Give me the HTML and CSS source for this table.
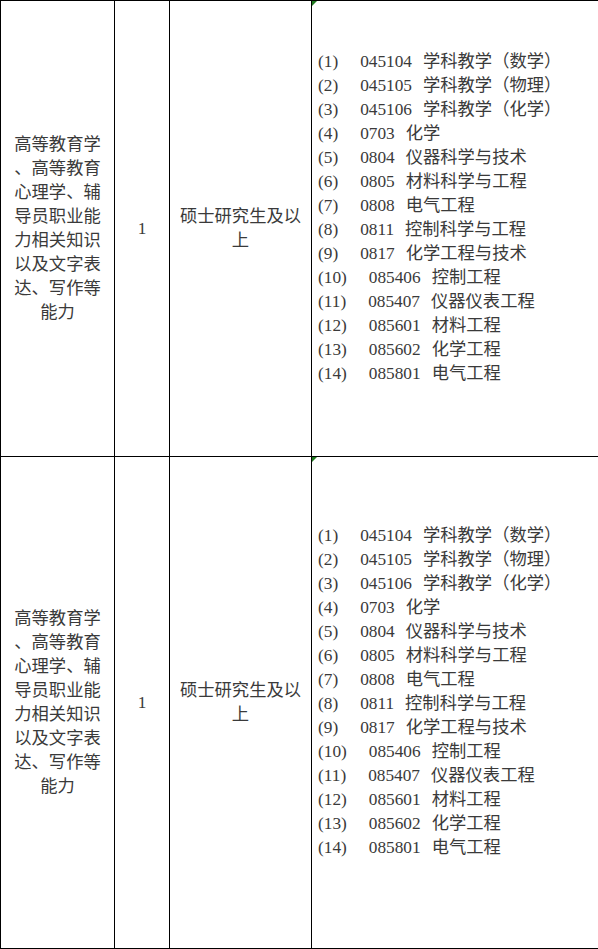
FILE: index.html
```html
<!DOCTYPE html>
<html lang="zh-CN">
<head>
<meta charset="utf-8">
<link rel="stylesheet" href="styles.css">
</head>
<body>
<table class="grid">
  <colgroup>
    <col class="c1"><col class="c2"><col class="c3"><col class="c4">
  </colgroup>
  <tbody>
    <tr class="r1">
      <td class="center desc">高等教育学、高等教育心理学、辅导员职业能力相关知识以及文字表达、写作等能力</td>
      <td class="center">1</td>
      <td class="center degree">硕士研究生及以上</td>
      <td class="list"><span class="mark"></span>
        <div class="item"><span class="no">(1)</span><span class="code">045104</span>学科教学（数学）</div>
        <div class="item"><span class="no">(2)</span><span class="code">045105</span>学科教学（物理）</div>
        <div class="item"><span class="no">(3)</span><span class="code">045106</span>学科教学（化学）</div>
        <div class="item"><span class="no">(4)</span><span class="code">0703</span>化学</div>
        <div class="item"><span class="no">(5)</span><span class="code">0804</span>仪器科学与技术</div>
        <div class="item"><span class="no">(6)</span><span class="code">0805</span>材料科学与工程</div>
        <div class="item"><span class="no">(7)</span><span class="code">0808</span>电气工程</div>
        <div class="item"><span class="no">(8)</span><span class="code">0811</span>控制科学与工程</div>
        <div class="item"><span class="no">(9)</span><span class="code">0817</span>化学工程与技术</div>
        <div class="item"><span class="no">(10)</span><span class="code">085406</span>控制工程</div>
        <div class="item"><span class="no">(11)</span><span class="code">085407</span>仪器仪表工程</div>
        <div class="item"><span class="no">(12)</span><span class="code">085601</span>材料工程</div>
        <div class="item"><span class="no">(13)</span><span class="code">085602</span>化学工程</div>
        <div class="item"><span class="no">(14)</span><span class="code">085801</span>电气工程</div>
      </td>
    </tr>
    <tr class="r2">
      <td class="center desc">高等教育学、高等教育心理学、辅导员职业能力相关知识以及文字表达、写作等能力</td>
      <td class="center">1</td>
      <td class="center degree">硕士研究生及以上</td>
      <td class="list"><span class="mark"></span>
        <div class="item"><span class="no">(1)</span><span class="code">045104</span>学科教学（数学）</div>
        <div class="item"><span class="no">(2)</span><span class="code">045105</span>学科教学（物理）</div>
        <div class="item"><span class="no">(3)</span><span class="code">045106</span>学科教学（化学）</div>
        <div class="item"><span class="no">(4)</span><span class="code">0703</span>化学</div>
        <div class="item"><span class="no">(5)</span><span class="code">0804</span>仪器科学与技术</div>
        <div class="item"><span class="no">(6)</span><span class="code">0805</span>材料科学与工程</div>
        <div class="item"><span class="no">(7)</span><span class="code">0808</span>电气工程</div>
        <div class="item"><span class="no">(8)</span><span class="code">0811</span>控制科学与工程</div>
        <div class="item"><span class="no">(9)</span><span class="code">0817</span>化学工程与技术</div>
        <div class="item"><span class="no">(10)</span><span class="code">085406</span>控制工程</div>
        <div class="item"><span class="no">(11)</span><span class="code">085407</span>仪器仪表工程</div>
        <div class="item"><span class="no">(12)</span><span class="code">085601</span>材料工程</div>
        <div class="item"><span class="no">(13)</span><span class="code">085602</span>化学工程</div>
        <div class="item"><span class="no">(14)</span><span class="code">085801</span>电气工程</div>
      </td>
    </tr>
  </tbody>
</table>
</body>
</html>
```
FILE: styles.css
```css
html, body {
  margin: 0;
  padding: 0;
  background: #fff;
}
.grid {
  border-collapse: collapse;
  table-layout: fixed;
  width: 598px;
  font-family: "Liberation Serif", "Noto Sans CJK SC", serif;
  font-size: 17.3px;
  line-height: 24px;
  color: #3a3a3a;
}
.c1 { width: 114px; }
.c2 { width: 55px; }
.c3 { width: 142px; }
.c4 { width: 287px; }
.grid td {
  border: 1px solid #000;
  padding: 0;
  vertical-align: middle;
}
.r1 { height: 456px; }
.r2 { height: 492px; }
.center {
  text-align: center;
}
.grid td.desc {
  padding: 0 10px;
  line-break: anywhere;
}
.grid td.degree {
  padding: 0 9px;
}
.grid td.list {
  position: relative;
  text-align: left;
  padding: 0 0 22px 6px;
}
.mark {
  position: absolute;
  left: 0;
  top: 0;
  width: 0;
  height: 0;
  border-top: 5px solid #1f7a1f;
  border-right: 5px solid transparent;
}
.item {
  white-space: nowrap;
}
.no {
  margin-right: 22px;
}
.code {
  margin-right: 11px;
}
```
